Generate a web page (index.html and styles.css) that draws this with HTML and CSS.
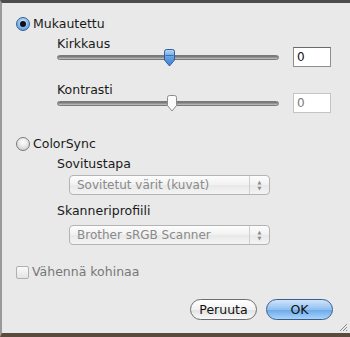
FILE: index.html
```html
<!DOCTYPE html>
<html lang="fi">
<head>
    <meta charset="UTF-8">
    <title>Skannausasetukset</title>
    <link rel="stylesheet" href="styles.css">
</head>
<body>
    <div class="sheet">
        <div class="panel">
            <label class="radio-row">
                <span class="radio checked"></span>
                <span>Mukautettu</span>
            </label>

            <div class="group">
                <div class="caption">Kirkkaus</div>
                <div class="slider-row">
                    <div class="slider">
                        <div class="track"></div>
                        <svg class="thumb" style="left: 106px" width="13" height="18" viewBox="0 0 13 18">
                            <defs>
                                <linearGradient id="blueThumb" x1="0" y1="0" x2="0" y2="1">
                                    <stop offset="0" stop-color="#b7d6f5"/>
                                    <stop offset="0.5" stop-color="#5d9ee4"/>
                                    <stop offset="1" stop-color="#3f82d6"/>
                                </linearGradient>
                            </defs>
                            <path d="M1.5 2.5 Q1.5 0.5 3.5 0.5 L9.5 0.5 Q11.5 0.5 11.5 2.5 L11.5 11 L6.5 17 L1.5 11 Z" fill="url(#blueThumb)" stroke="#2f5f9a"/>
                            <path d="M2.5 6.5 L10.5 6.5" stroke="#3a6fb0" stroke-width="1"/>
                        </svg>
                    </div>
                    <input class="value" type="text" value="0">
                </div>
            </div>

            <div class="group second">
                <div class="caption">Kontrasti</div>
                <div class="slider-row">
                    <div class="slider">
                        <div class="track"></div>
                        <svg class="thumb" style="left: 109px" width="12" height="17" viewBox="0 0 12 17">
                            <path d="M1.5 2.5 Q1.5 0.5 3.5 0.5 L8.5 0.5 Q10.5 0.5 10.5 2.5 L10.5 10.5 L6 16 L1.5 10.5 Z" fill="#fbfbfb" stroke="#8c8c8c"/>
                        </svg>
                    </div>
                    <input class="value disabled" type="text" value="0">
                </div>
            </div>

            <label class="radio-row colorsync">
                <span class="radio"></span>
                <span>ColorSync</span>
            </label>

            <div class="group">
                <div class="caption">Sovitustapa</div>
                <div class="popup">
                    <span>Sovitetut värit (kuvat)</span>
                    <span class="arrows">&#9650;<br>&#9660;</span>
                </div>
            </div>

            <div class="group second">
                <div class="caption">Skanneriprofiili</div>
                <div class="popup">
                    <span>Brother sRGB Scanner</span>
                    <span class="arrows">&#9650;<br>&#9660;</span>
                </div>
            </div>

            <label class="check-row">
                <span class="checkbox"></span>
                <span>Vähennä kohinaa</span>
            </label>

            <div class="buttons">
                <button class="btn">Peruuta</button>
                <button class="btn default">OK</button>
            </div>
        </div>
        <svg class="grip" width="9" height="9" viewBox="0 0 9 9">
            <path d="M8 1 L1 8 M8 4 L4 8 M8 7 L7 8" stroke="#8a8a8a" stroke-width="1"/>
        </svg>
    </div>
</body>
</html>
```

FILE: styles.css
```css
* {
    margin: 0;
    padding: 0;
    box-sizing: border-box;
}

body {
    width: 350px;
    height: 337px;
    overflow: hidden;
    background: #e8e8e8;
    font-family: "DejaVu Sans", "Liberation Sans", sans-serif;
    font-size: 12px;
    color: #1a1a1a;
}

.sheet {
    position: relative;
    width: 350px;
    height: 337px;
    background: #e9e9e9;
    border-top: 3px solid #4d4d50;
    border-left: 2px solid #9a9a9a;
    border-bottom: 4px solid #5b4b3e;
}

.panel {
    padding: 14px 0 0 14px;
}

.radio-row,
.check-row {
    display: flex;
    align-items: center;
    gap: 3px;
    height: 14px;
    line-height: 14px;
    font-size: 12.5px;
}

.radio {
    width: 14px;
    height: 14px;
    border-radius: 50%;
    border: 1px solid #7b7b7b;
    background: radial-gradient(circle at 50% 35%, #ffffff 0%, #e2e2e2 55%, #bdbdbd 100%);
    position: relative;
}

.radio.checked {
    border-color: #3a5f8f;
    background: radial-gradient(circle at 50% 35%, #d8ebff 0%, #7cb4ee 55%, #4a8ad8 100%);
}

.radio.checked::after {
    content: "";
    position: absolute;
    left: 3px;
    top: 3px;
    width: 6px;
    height: 6px;
    border-radius: 50%;
    background: #111;
}

.group {
    padding-left: 41px;
}

.caption {
    height: 15px;
    line-height: 15px;
    margin-top: 5px;
    font-size: 12.5px;
}

.group.second .caption {
    margin-top: 15px;
}

.slider-row {
    display: flex;
    align-items: center;
    height: 20px;
    margin-top: -4px;
}

.slider {
    position: relative;
    width: 222px;
    height: 20px;
}

.track {
    position: absolute;
    left: 0;
    right: 0;
    top: 8px;
    height: 5px;
    border-radius: 3px;
    background: linear-gradient(#6e6e6e, #9c9c9c 60%, #c8c8c8);
    border: 1px solid #7a7a7a;
}

.thumb {
    position: absolute;
    top: 2px;
}

.value {
    margin-left: 14px;
    width: 38px;
    height: 20px;
    border: 1px solid #8e8e8e;
    border-top-color: #6a6a6a;
    background: #fff;
    font-family: "DejaVu Sans", sans-serif;
    font-size: 12px;
    padding-left: 3px;
    color: #111;
    outline: none;
}

.value.disabled {
    color: #7a7a7a;
    border-color: #c4c4c4;
}

.colorsync {
    margin-top: 24px;
}

.popup {
    display: flex;
    justify-content: space-between;
    align-items: center;
    margin: 4px 0 0 12px;
    width: 201px;
    height: 20px;
    border: 1px solid #b4b4b4;
    border-radius: 4px;
    background: linear-gradient(#fdfdfd, #f1f1f1 50%, #e8e8e8 51%, #f4f4f4);
    color: #8a8a8a;
    font-size: 12px;
    padding-left: 7px;
}

.arrows {
    width: 20px;
    height: 18px;
    border-left: 1px solid #cfcfcf;
    font-size: 5px;
    line-height: 6px;
    text-align: center;
    padding-top: 3px;
    color: #8a8a8a;
}

.group.second .caption + .popup {
    margin-top: 7px;
}

.group.second:has(.popup) .caption {
    margin-top: 8px;
}

.check-row {
    margin-top: 20px;
    color: #777;
}

.checkbox {
    width: 13px;
    height: 13px;
    border: 1px solid #b0b0b0;
    border-radius: 2px;
    background: linear-gradient(#fafafa, #e4e4e4);
}

.buttons {
    display: flex;
    justify-content: flex-end;
    gap: 9px;
    margin-top: 20px;
    padding-right: 17px;
}

.btn {
    width: 67px;
    height: 21px;
    border-radius: 11px;
    border: 1px solid #6e6e6e;
    background: linear-gradient(#ffffff, #f2f2f2 50%, #e2e2e2 51%, #f8f8f8);
    font-family: "DejaVu Sans", sans-serif;
    font-size: 12.5px;
    color: #111;
}

.btn.default {
    border-color: #3b5d8c;
    background: linear-gradient(#cfe5fb, #8fc0f0 50%, #6aa8ea 51%, #a8d4fa);
}

.grip {
    position: absolute;
    right: 2px;
    bottom: 1px;
}
```
